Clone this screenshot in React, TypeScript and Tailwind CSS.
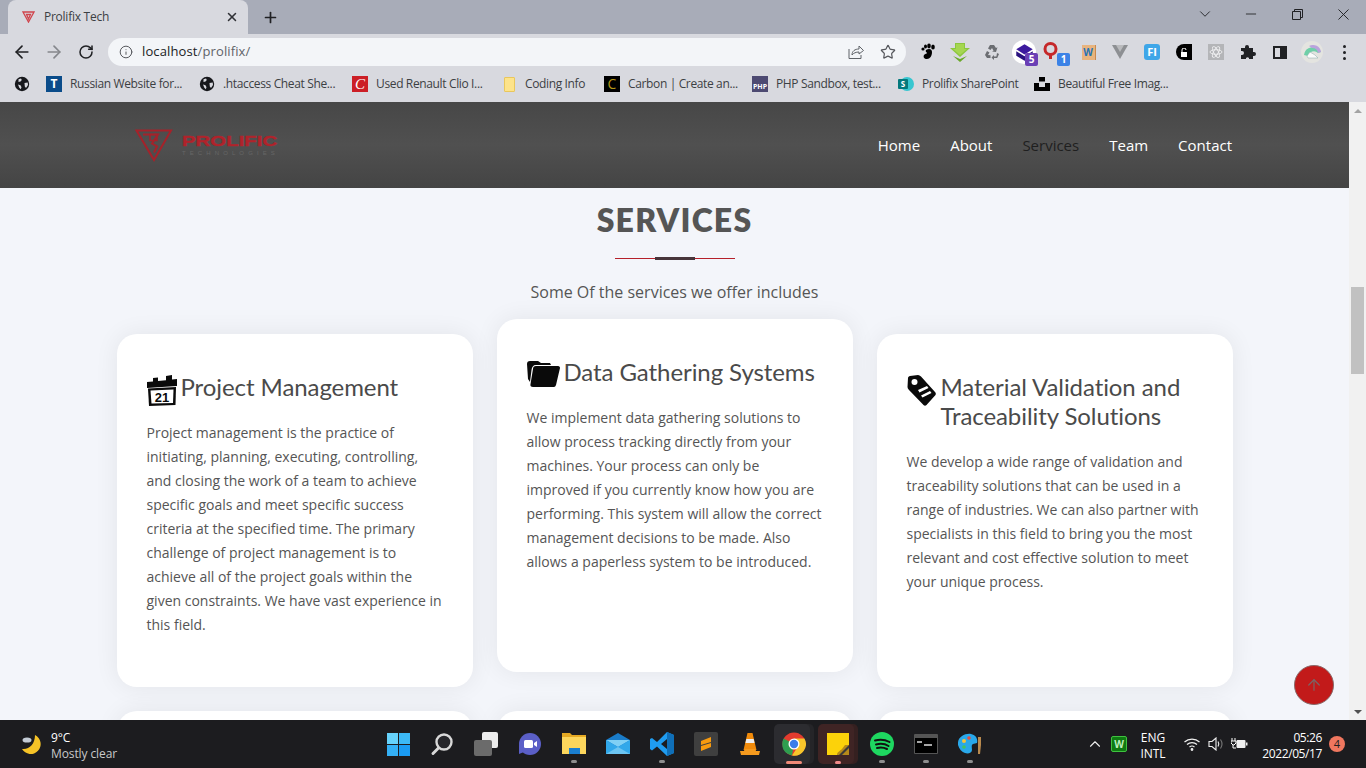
import React from "react";
import { ArrowLeft, ArrowRight, RotateCw, Info, Star, Plus, X, ChevronDown, ChevronUp, Minus, ArrowUp } from "lucide-react";

const ui = "font-['Open_Sans',sans-serif]";

function Globe() {
  return (
    <svg width="16" height="16" viewBox="0 0 16 16">
      <circle cx="8" cy="8" r="7.2" fill="#17181c" />
      <path d="M4.500 3.200L7 2.600l.8 1.400-1.300 1.500-2 .6zM10.500 7l3.200-.6.3 2.600-2 3-1.200-1.500zM4 8.500l2.500.8 1 2-.7 2-1.500-1.500z" fill="#d8d9df" />
    </svg>
  );
}

function Tile({ bg, children, cls = "" }: { bg: string; children?: React.ReactNode; cls?: string }) {
  return <div className={`w-4 h-4 flex items-center justify-center text-[12px] leading-none font-bold ${cls}`} style={{ background: bg }}>{children}</div>;
}

function Bookmark({ icon, text, w }: { icon: React.ReactNode; text: string; w: number }) {
  return (
    <div className="flex items-center gap-2 mr-4 shrink-0">
      <div className="w-4 h-4 flex items-center justify-center">{icon}</div>
      <span className="text-[12px] text-[#3c4043] whitespace-nowrap tracking-[-0.36px]" style={{ width: w }}>{text}</span>
    </div>
  );
}

function Slot({ children }: { children: React.ReactNode }) {
  return <div className="w-8 h-8 flex items-center justify-center relative shrink-0">{children}</div>;
}

function Extensions() {
  return (
    <div className="flex ml-[6px]">
      <Slot>
        <svg width="18" height="18" viewBox="0 0 18 18"><path d="M7 7c3-2 6-1 6 2 0 4-2 7-5 7-3 0-4-2-3-4 1-1.500 3-1 3-2 0-1-2-1-1-3z" fill="#000" /><circle cx="4" cy="6" r="1.600" fill="#000" /><ellipse cx="6.500" cy="3.500" rx="1.500" ry="2" fill="#000" /><ellipse cx="10" cy="3" rx="1.800" ry="2.400" fill="#000" /><ellipse cx="14" cy="4" rx="1.800" ry="2.600" fill="#000" /></svg>
      </Slot>
      <Slot>
        <svg width="20" height="19" viewBox="0 0 20 19"><path d="M0 5h5V0h10v5h5l-10 9z" fill="#8cc63f" /><path d="M6 1h8v5h3l-7 6-7-6h3z" fill="#a5d651" /><path d="M3 13l7 6 7-6-7 3z" fill="#6aa82a" /></svg>
      </Slot>
      <Slot>
        <svg width="16" height="16" viewBox="0 0 16 16" fill="#6b6d72"><path d="M6 1h4l2 3 1.500-.8L12 8 8 7.500l1.500-.8L8 4 6.500 6 4 4.500zM3 7l2.500 1.500L4 11l2.500.2V14H3L1 11zM15 10l-1.800 4H10v2L7.500 13.500 10 11v1.400h2.400L13 9z" /></svg>
      </Slot>
      <Slot>
        <div className="w-6 h-6 rounded-full bg-white flex items-center justify-center">
          <svg width="19" height="19" viewBox="0 0 15 15"><path d="M7.500 1L14 5 7.500 9 1 5z" fill="#3c1a9e" /><path d="M1 6.500l6.500 4 6.500-4V10l-6.500 4L1 10z" fill="#2a1280" /></svg>
        </div>
        <div className="absolute right-[2px] bottom-[2px] w-[13px] h-[13px] bg-[#6a3fb5] rounded-[2px] text-white text-[10px] leading-[13px] text-center font-bold">5</div>
      </Slot>
      <Slot>
        <svg className="mb-[4px] mr-[12px]" width="15" height="17" viewBox="0 0 15 17" fill="none"><circle cx="7.500" cy="7" r="5.500" stroke="#c5282a" strokeWidth="3" /><path d="M7.500 12v5" stroke="#c5282a" strokeWidth="3" /></svg>
        <div className="absolute right-[2px] bottom-[2px] w-[13px] h-[13px] bg-[#3b82e6] rounded-[2px] text-white text-[10px] leading-[13px] text-center font-bold">1</div>
      </Slot>
      <Slot>
        <div className="w-[13px] h-[15px] bg-[#e8b47f] text-[#2473b8] text-[10px] leading-[15px] text-center font-bold shadow-[1px_0_0_#c98a4f]">W</div>
      </Slot>
      <Slot>
        <svg width="16" height="14" viewBox="0 0 16 14"><path d="M0 0h16L8 14z" fill="#8d8f93" /><path d="M4 0h8L8 7z" fill="#b9babd" /></svg>
      </Slot>
      <Slot>
        <div className="w-4 h-4 bg-[#3ea6e8] rounded-[3px] text-white text-[11px] leading-4 text-center font-bold">FI</div>
      </Slot>
      <Slot>
        <div className="w-4 h-4 bg-black rounded-l-full rounded-r-[2px] flex items-center justify-center">
          <svg width="8" height="9" viewBox="0 0 8 9"><path d="M1 4h6v5H1z" fill="#fff" /><path d="M2 4V2a2 2 0 0 1 4 0" stroke="#fff" fill="none" /></svg>
        </div>
      </Slot>
      <Slot>
        <div className="w-4 h-4 bg-[#b4b5b8] flex items-center justify-center">
          <svg width="14" height="14" viewBox="0 0 14 14" fill="none" stroke="#f0f0f2" strokeWidth="0.900"><ellipse cx="7" cy="7" rx="6" ry="2.300" /><ellipse cx="7" cy="7" rx="6" ry="2.300" transform="rotate(60 7 7)" /><ellipse cx="7" cy="7" rx="6" ry="2.300" transform="rotate(120 7 7)" /></svg>
        </div>
      </Slot>
      <Slot>
        <svg width="16" height="16" viewBox="0 0 16 16"><path d="M1 4h4V3a2 2 0 0 1 4 0v1h4v4h1a2 2 0 0 1 0 4h-1v3H9v-1a2 2 0 0 0-3 0v1H1v-4h1a2 2 0 0 0 0-4H1z" fill="#202124" /></svg>
      </Slot>
      <Slot>
        <div className="w-[14px] h-[13px] border-2 border-[#202124] flex justify-end"><div className="w-[5px] h-full bg-[#202124]" /></div>
      </Slot>
      <Slot>
        <div className="w-[22px] h-[22px] rounded-full bg-[#e4e4e0] overflow-hidden flex items-center justify-center">
          <svg width="22" height="22" viewBox="0 0 22 22"><path d="M3 14a9 9 0 0 1 17-3l-3 1a6 6 0 0 0-10 3z" fill="#6fcfa8" /><path d="M8 5a8 8 0 0 1 12 6l-3 1a6 6 0 0 0-6-5z" fill="#b9a3dc" /><path d="M6 15l3-4 5 3 3 3H7z" fill="#fbfbfb" stroke="#8aa" strokeWidth="0.500" /></svg>
        </div>
      </Slot>
      <Slot>
        <div className="flex flex-col gap-[3px]"><i className="block w-[3px] h-[3px] rounded-full bg-[#202124]" /><i className="block w-[3px] h-[3px] rounded-full bg-[#202124]" /><i className="block w-[3px] h-[3px] rounded-full bg-[#202124]" /></div>
      </Slot>
    </div>
  );
}

function BrowserChrome() {
  return (
    <div className={`${ui} shrink-0`}>
      <div className="h-[34px] bg-[#a8acb8] flex">
        <div className="ml-2 w-[240px] h-[34px] bg-[#d8d9df] rounded-t-[8px] flex items-center pl-[14px] pr-[9px]">
          <svg width="13" height="12" viewBox="0 0 13 12" fill="none" stroke="#d0444c" strokeWidth="1.300"><path d="M1 1h11L6.500 11z" /><path d="M4.500 3.500h4L6.500 8z" /></svg>
          <span className="ml-[9px] text-[12px] text-[#3c4043] tracking-[-0.25px]">Prolifix Tech</span>
          <X className="ml-auto" size={14} strokeWidth={2.600} color="#303136" />
        </div>
        <div className="ml-[14px] flex items-center"><Plus size={17} strokeWidth={2.400} color="#202124" /></div>
        <div className="ml-auto flex h-[28px] text-[#202124]">
          <div className="w-[46px] flex items-center justify-center"><ChevronDown size={18} strokeWidth={1.200} /></div>
          <div className="w-[46px] flex items-center justify-center"><Minus size={16} strokeWidth={1.300} /></div>
          <div className="w-[46px] flex items-center justify-center">
            <svg width="11" height="11" viewBox="0 0 11 11" fill="none" stroke="#202124"><path d="M.5 2.500h8v8h-8zM2.500 2.500v-2h8v8h-2" /></svg>
          </div>
          <div className="w-[46px] flex items-center justify-center"><X size={19} strokeWidth={1.200} /></div>
        </div>
      </div>
      <div className="h-[36px] bg-[#d8d9df] flex items-center pl-[6px]">
        <div className="w-8 flex justify-center"><ArrowLeft size={20} strokeWidth={2} color="#202124" /></div>
        <div className="w-8 flex justify-center"><ArrowRight size={20} strokeWidth={2} color="#85878c" /></div>
        <div className="w-8 flex justify-center"><RotateCw size={16} strokeWidth={2.300} color="#202124" /></div>
        <div className="ml-[6px] w-[798px] h-[28px] bg-[#f3f5f8] rounded-full flex items-center pl-[11px] pr-[10px] text-[13px] tracking-[0.12px]">
          <Info size={14} strokeWidth={1.700} color="#55575c" />
          <span className="ml-[9px] text-[#202124]">localhost</span>
          <span className="text-[#5f6368]">/prolifix/</span>
          <svg className="ml-auto" width="16" height="16" viewBox="0 0 16 16" fill="none" stroke="#5f6368" strokeWidth="1"><path d="M1 5v9.500h12V11" /><path d="M4 11c0-4 3-6 7-6V2l4.500 4.500L11 10V8C8 8 5.500 9 4 11z" /></svg>
          <Star className="ml-4" size={16} strokeWidth={1.800} color="#55575c" />
        </div>
        <Extensions />
      </div>
      <div className="h-[32px] bg-[#d8d9df] flex items-center pl-[14px] pb-1">
        <div className="mr-4 shrink-0 w-4 h-4"><Globe /></div>
        <Bookmark w={113} text="Russian Website for..." icon={<Tile bg="#0a4c8a" cls="text-white">T</Tile>} />
        <Bookmark w={113} text=".htaccess Cheat She..." icon={<Globe />} />
        <Bookmark w={109} text="Used Renault Clio I..." icon={<Tile bg="#cc1f26" cls="text-white italic font-normal font-['Liberation_Serif',serif] text-[15px]">C</Tile>} />
        <Bookmark w={63} text="Coding Info" icon={<div className="w-[11px] h-[15px] bg-[#fde38a] border border-[#e9c75c] rounded-[1px]" />} />
        <Bookmark w={108} text="Carbon | Create an..." icon={<Tile bg="#000" cls="text-[#b5971a] font-normal text-[14px]">C</Tile>} />
        <Bookmark w={106} text="PHP Sandbox, test..." icon={<div className={`w-4 h-4 bg-[#4d4a72] text-white text-[7px] leading-none font-bold flex items-end justify-center pb-[2px] ${ui}`}>PHP</div>} />
        <Bookmark w={96} text="Prolifix SharePoint" icon={<div className="w-4 h-4 relative"><div className="absolute right-0 top-[1px] w-[14px] h-[14px] rounded-full bg-[#37c6d0]" /><div className="absolute left-0 top-[3px] w-[10px] h-[10px] rounded-[1px] bg-[#03787c] text-white text-[8px] leading-[10px] text-center font-bold">S</div></div>} />
        <Bookmark w={111} text="Beautiful Free Imag..." icon={<svg width="16" height="16" viewBox="0 0 16 16"><path d="M5 1h6v4.500H5zM0 7h5v4h6V7h5v8H0z" fill="#000" /></svg>} />
      </div>
    </div>
  );
}

function Logo() {
  return (
    <div className="flex items-start ml-[135px]">
      <svg width="38" height="33" viewBox="0 0 38 33" fill="none" stroke="#a5222a" strokeWidth="2">
        <path d="M1.500 1.500h34.500L19 31z" />
        <path d="M8 5.500h15l-6 9 5 3-3 6" />
        <path d="M15 5.500h7v6h-7z" strokeWidth="1.500" />
      </svg>
      <div className="ml-[9px] mt-[5px] leading-none">
        <div className="font-['Liberation_Sans',sans-serif] font-bold text-[15px] h-[14px] leading-[14px] text-[#b0232b] [-webkit-text-stroke:0.4px_#b0232b] origin-left scale-x-[1.36] whitespace-nowrap">PROLIFIC</div>
        <div className="font-['Liberation_Sans',sans-serif] text-[6px] mt-[2px] tracking-[4.100px] text-[#666666] whitespace-nowrap">TECHNOLOGIES</div>
      </div>
    </div>
  );
}

function Header() {
  return (
    <div className="h-[86px] shrink-0 bg-gradient-to-b from-[#474747] via-[#505050] to-[#444444] flex items-center justify-between pr-[117px]">
      <Logo />
      <nav className={`flex gap-[30px] text-[15px] font-medium text-white ${ui}`}>
        <span>Home</span>
        <span>About</span>
        <span className="text-[#1f1f1f]">Services</span>
        <span>Team</span>
        <span>Contact</span>
      </nav>
    </div>
  );
}

function CalendarIcon() {
  return (
    <svg className="shrink-0" width="30" height="31" viewBox="0 0 30 31">
      <path d="M0 7l6-.5V3l5-.5V6l8-.8V1l6-1v4.500l5-.5v7L0 13z" fill="#0a0a0a" />
      <path d="M1 13.500l28-1.500-.5 18L2 31z" fill="#0a0a0a" />
      <path d="M3.500 15.500l23-1-.5 13.500-21.500.5z" fill="#fff" />
      <text x="15" y="27" textAnchor="middle" fontFamily="Liberation Sans, sans-serif" fontWeight="700" fontSize="13" fill="#0a0a0a">21</text>
    </svg>
  );
}

function FolderIcon() {
  return (
    <svg className="shrink-0" width="33" height="27" viewBox="0 0 33 27">
      <path d="M0 4c0-2 1-3 3-3h8l3 2h9l1 2H9C6 5 5 7 4.500 10L3 22 1 19z" fill="#0a0a0a" />
      <path d="M6 9c0-2 1-3 3-3h22c1.500 0 2 1 2 2l-4 17c-.5 1-1 2-2 2H6c-2 0-3-1-2.500-3z" fill="#0a0a0a" />
    </svg>
  );
}

function TagIcon() {
  return (
    <svg className="shrink-0" width="30" height="31" viewBox="0 0 30 31">
      <path d="M3 1l8-1c1 0 2 .5 3 1.500L28 17c1 1 1 2 .5 3l-9 10c-1 1-2 1-3 0L2 15c-1-1-1.500-2-1.500-3L1 3c0-1 1-2 2-2z" fill="#0a0a0a" />
      <circle cx="7.500" cy="7" r="3" fill="#fff" />
      <path d="M11 15l9-4 1.500 2-9 4.500zM14 20.500l9-4.500 1.500 2-9 4.500z" fill="#fff" />
    </svg>
  );
}

function Card({ icon, title, body, up }: { icon: React.ReactNode; title: React.ReactNode; body: string; up?: boolean }) {
  return (
    <div className={`h-[353px] bg-white rounded-[20px] shadow-[0_0_25px_0_rgba(0,0,0,0.07)] px-[30px] pt-[40px] ${up ? "mb-[15px]" : "mt-[15px]"}`}>
      <div className="flex gap-[4px] items-start">
        <div className="h-[29px] pt-px">{icon}</div>
        <h4 className="font-['Lato',sans-serif] font-normal text-[24px] leading-[29px] tracking-[-0.08px] text-[#4a4a4a] -translate-y-[2px]">{title}</h4>
      </div>
      <p className={`mt-[18px] text-[14px] leading-[24px] text-[#555] ${ui}`}>{body}</p>
    </div>
  );
}

function Services() {
  return (
    <div className="flex-1 min-h-0 overflow-hidden bg-[#f3f5fa]">
      <div className="h-[64px] flex items-center justify-center">
        <h2 className="font-['Lato',sans-serif] font-extrabold text-[32px] tracking-[1.2px] text-[#555]">SERVICES</h2>
      </div>
      <div className="mt-[5px] w-[120px] h-[3px] mx-auto flex items-center justify-center relative">
        <div className="w-full h-px bg-[#b5202a]" />
        <div className="absolute w-10 h-[3px] bg-[#47353a]" />
      </div>
      <p className={`mt-[20px] text-center text-[16px] leading-[24px] text-[#555] ${ui}`}>Some Of the services we offer includes</p>
      <div className="mt-[15px] w-[1116px] mx-auto grid grid-cols-3 gap-6">
        <Card icon={<CalendarIcon />} title="Project Management" body="Project management is the practice of initiating, planning, executing, controlling, and closing the work of a team to achieve specific goals and meet specific success criteria at the specified time. The primary challenge of project management is to achieve all of the project goals within the given constraints. We have vast experience in this field." />
        <Card up icon={<FolderIcon />} title="Data Gathering Systems" body="We implement data gathering solutions to allow process tracking directly from your machines. Your process can only be improved if you currently know how you are performing. This system will allow the correct management decisions to be made. Also allows a paperless system to be introduced." />
        <Card icon={<TagIcon />} title="Material Validation and Traceability Solutions" body="We develop a wide range of validation and traceability solutions that can be used in a range of industries. We can also partner with specialists in this field to bring you the most relevant and cost effective solution to meet your unique process." />
        <div className="h-[353px] bg-white rounded-[20px] shadow-[0_0_25px_0_rgba(0,0,0,0.07)]" />
        <div className="h-[353px] bg-white rounded-[20px] shadow-[0_0_25px_0_rgba(0,0,0,0.07)]" />
        <div className="h-[353px] bg-white rounded-[20px] shadow-[0_0_25px_0_rgba(0,0,0,0.07)]" />
      </div>
    </div>
  );
}

function Scrollbar() {
  return (
    <div className="w-[17px] shrink-0 bg-[#f1f1f1] flex flex-col items-center">
      <div className="h-[17px] flex items-center justify-center"><div className="w-0 h-0 border-x-[4px] border-x-transparent border-b-[4px] border-b-[#a3a3a3]" /></div>
      <div className="mt-[168px] w-[13px] h-[87px] bg-[#c1c1c1]" />
      <div className="mt-auto h-[17px] flex items-center justify-center"><div className="w-0 h-0 border-x-[4px] border-x-transparent border-t-[4px] border-t-[#505050]" /></div>
    </div>
  );
}

function TI({ children, dot, active }: { children: React.ReactNode; dot?: boolean; active?: "chrome" | "sticky" }) {
  return (
    <div className="w-11 h-12 relative flex items-center justify-center shrink-0">
      {active === "chrome" && <div className="absolute left-[2px] top-1 w-[36px] h-[40px] bg-[#2c2c30] rounded-[5px] shadow-[4px_0_0_#252528]" />}
      {active === "sticky" && <div className="absolute left-[2px] top-1 w-[36px] h-[40px] bg-[#3f2424] rounded-[5px] shadow-[4px_0_0_#352020]" />}
      <div className="relative w-6 h-6 flex items-center justify-center">{children}</div>
      {dot && <div className="absolute bottom-[5px] left-1/2 -translate-x-1/2 w-[6px] h-[3px] rounded-full bg-[#8e8e8e]" />}
      {active === "chrome" && <div className="absolute bottom-[4px] left-1/2 -translate-x-1/2 w-4 h-[3px] rounded-full bg-[#f08a78]" />}
      {active === "sticky" && <div className="absolute bottom-[4px] left-1/2 -translate-x-1/2 w-[6px] h-[3px] rounded-full bg-[#f08a8a]" />}
    </div>
  );
}

function Taskbar() {
  return (
    <div className={`h-12 shrink-0 bg-[#1c1c1f] flex items-center relative ${ui}`}>
      <div className="w-[51px] flex justify-end pr-[8px]">
        <svg width="22" height="22" viewBox="0 0 22 22"><path d="M14 2a10 10 0 1 1-13 14c7 1 13-5 13-14z" fill="#f6c327" /><ellipse cx="6" cy="7" rx="4.500" ry="2.600" fill="#c4ccd6" /></svg>
      </div>
      <div className="text-[12px] leading-[16px] w-[325px] pt-[3px] tracking-[-0.1px]">
        <div className="text-white">9°C</div>
        <div className="text-[#c9c9c9]">Mostly clear</div>
      </div>
      <div className="flex">
        <TI>
          <div className="grid grid-cols-2 gap-[1px] w-[23px] h-[23px]">
            <i className="bg-[#66d2fb]" /><i className="bg-[#3cb9f6]" /><i className="bg-[#34b0f5]" /><i className="bg-[#1a9bf2]" />
          </div>
        </TI>
        <TI>
          <svg width="24" height="24" viewBox="0 0 24 24" fill="none"><circle cx="14" cy="10" r="7.500" stroke="#d8d8d8" strokeWidth="2.400" fill="#26262a" /><path d="M8.500 16L3 21.500" stroke="#d8d8d8" strokeWidth="3" strokeLinecap="round" /></svg>
        </TI>
        <TI>
          <div className="relative w-6 h-6">
            <div className="absolute right-0 top-0 w-4 h-4 bg-[#ececec] rounded-[2px]" />
            <div className="absolute left-0 bottom-0 w-[18px] h-4 bg-[#6b6b6b] rounded-[2px]" />
          </div>
        </TI>
        <TI>
          <svg width="24" height="24" viewBox="0 0 24 24"><circle cx="12" cy="12" r="11" fill="#5b5fc7" /><path d="M1 12v10l5-2z" fill="#5b5fc7" /><rect x="6" y="8" width="9" height="8" rx="1.500" fill="#fff" /><path d="M16 11l3-2v6l-3-2z" fill="#fff" /></svg>
        </TI>
        <TI dot>
          <svg width="24" height="24" viewBox="0 0 24 24"><path d="M0 1h8l2 2h14v19H0z" fill="#e5a923" /><path d="M0 5h24v17H0z" fill="#fcd65c" /><path d="M7 16h11v6H7z" fill="#1a7fd1" /></svg>
        </TI>
        <TI>
          <svg width="24" height="24" viewBox="0 0 24 24"><path d="M0 8l12-7 12 7v14H0z" fill="#1a7cc9" /><path d="M0 8h24L12 15z" fill="#7fd0f5" /><path d="M0 8l12 7 12-7v14H0z" fill="#31a8ea" /><path d="M0 22l12-7 12 7z" fill="#6cc5f2" /></svg>
        </TI>
        <TI dot>
          <svg width="24" height="24" viewBox="0 0 24 24"><path d="M17 0l7 3v18l-7 3-10-9.500-5 4L0 17v-10l2-1 5 4zM17 7l-6 5 6 5z" fill="#1f9cf0" /><path d="M17 0v24l7-3V3z" fill="#0f6fb8" /></svg>
        </TI>
        <TI>
          <svg width="24" height="24" viewBox="0 0 24 24"><rect width="24" height="24" rx="2" fill="#3f3f3f" /><path d="M17 5L7 9v4l10-3V7zM7 19l10-4v-4L7 14z" fill="#f79a0e" /></svg>
        </TI>
        <TI>
          <svg width="20" height="24" viewBox="0 0 20 24"><path d="M7.500 1h5l4 17H3.500z" fill="#f08a0a" /><path d="M6.300 7h7.400l.8 4H5.500z" fill="#eee" /><path d="M0 19h4l.5-2h11l.5 2h4l-1 4H1z" fill="#f59a1e" /></svg>
        </TI>
        <TI active="chrome">
          <svg width="24" height="24" viewBox="0 0 24 24"><circle cx="12" cy="12" r="11.500" fill="#e33b2e" /><path d="M12 12L1.600 6.500A11.500 11.500 0 0 0 10 23.400z" fill="#2e9e4f" /><path d="M12 6.500h10.400A11.500 11.500 0 0 1 10 23.400l6-9z" fill="#f7c52b" /><circle cx="12" cy="12" r="5.500" fill="#fff" /><circle cx="12" cy="12" r="4.200" fill="#3b7de8" /></svg>
        </TI>
        <TI active="sticky">
          <svg width="22" height="22" viewBox="0 0 22 22"><path d="M0 0h22v15l-7 7H0z" fill="#fcd20a" /><path d="M22 12v10H10c0-3 3-4 5-6l3-4z" fill="#b5891a" /><path d="M12 22l10-10v3l-7 7z" fill="#3a3a3a" /></svg>
        </TI>
        <TI dot>
          <svg width="24" height="24" viewBox="0 0 24 24"><circle cx="12" cy="12" r="12" fill="#1ed760" /><path d="M5 8.500c5-1.500 10-1 14.500 1.500M6 12.500c4-1 9-.7 12.500 1.500M7 16c3.500-.8 7-.5 10 1" stroke="#111" strokeWidth="2" strokeLinecap="round" fill="none" /></svg>
        </TI>
        <TI dot>
          <svg width="24" height="20" viewBox="0 0 24 20"><rect width="24" height="20" rx="1" fill="#555" /><rect x="1" y="4" width="22" height="15" fill="#000" /><path d="M3 8h5M10 11h8" stroke="#ddd" strokeWidth="1.500" /></svg>
        </TI>
        <TI dot>
          <svg width="24" height="24" viewBox="0 0 24 24"><path d="M0 13C-1 5 7 1 13 2c5 1 7 5 6 9l-4 1c-2 1-1 4-1 6 0 3-4 4-7 3-3-1-6-4-7-8z" fill="#29a8ea" /><circle cx="6" cy="9" r="2" fill="#f5c33b" /><circle cx="11" cy="6" r="1.800" fill="#e84c3d" /><circle cx="6" cy="15" r="1.800" fill="#43c463" /><path d="M20 5h3v8l-1 9h-2z" fill="#b98a4e" /></svg>
        </TI>
      </div>
      <div className="absolute right-0 top-0 h-12 flex items-center text-white">
        <ChevronUp size={18} strokeWidth={1.500} color="#eee" />
        <div className="ml-[7px] w-4 h-4 bg-[#0f7a12] border border-[#3fc23f] rounded-[2px] text-[#bff0bf] text-[10px] leading-[14px] text-center font-bold">W</div>
        <div className="ml-[14px] w-[24px] text-[12px] leading-[16px] pt-[3px] whitespace-nowrap flex flex-col items-center"><span>ENG</span><span>INTL</span></div>
        <svg className="ml-[19px]" width="16" height="14" viewBox="0 0 16 14" fill="none" stroke="#f0f0f0" strokeWidth="1.200"><path d="M.5 5a11 11 0 0 1 15 0M3 7.500a7.500 7.500 0 0 1 10 0M5.500 10a4 4 0 0 1 5 0" /><circle cx="8" cy="12.500" r=".8" fill="#f0f0f0" /></svg>
        <svg className="ml-[8px]" width="16" height="14" viewBox="0 0 16 14" fill="none" stroke="#f0f0f0" strokeWidth="1.100"><path d="M1 4.500h3L8 1v12L4 9.500H1z" /><path d="M10 4.500c1 1.500 1 3.500 0 5" /><path d="M12.500 2.500c2 3 2 6 0 9" stroke="#777" /></svg>
        <svg className="ml-[7px]" width="17" height="14" viewBox="0 0 17 14"><path d="M1 1v3M4 1v3M0 4h5v2L3 8H2L0 6zM2 8v3h3" stroke="#fff" fill="none" strokeWidth="1" /><rect x="5.500" y="3" width="9" height="8" rx="1" fill="#f0f0f0" /><rect x="15" y="5.500" width="1.500" height="3" fill="#f0f0f0" /></svg>
        <div className="ml-[14px] w-[60px] text-[12px] leading-[16px] pt-[3px] text-right whitespace-nowrap flex flex-col items-end tracking-[-0.4px]"><span>05:26</span><span>2022/05/17</span></div>
        <div className="ml-[7px] mr-[21px] w-4 h-4 rounded-full bg-[#f0775f] text-[#222] text-[11px] leading-4 text-center">4</div>
      </div>
    </div>
  );
}

export default function App() {
  return (
    <div className="w-[1366px] h-[768px] overflow-hidden flex flex-col relative">
      <BrowserChrome />
      <div className="flex-1 min-h-0 flex">
        <div className="flex-1 min-w-0 flex flex-col">
          <Header />
          <Services />
        </div>
        <Scrollbar />
      </div>
      <Taskbar />
      <div className="absolute left-[1294px] top-[665px] w-10 h-10 rounded-full bg-[#c21a1a] border border-[#8a6a6a] flex items-center justify-center">
        <ArrowUp size={18} strokeWidth={1.600} color="#7a6666" />
      </div>
    </div>
  );
}
